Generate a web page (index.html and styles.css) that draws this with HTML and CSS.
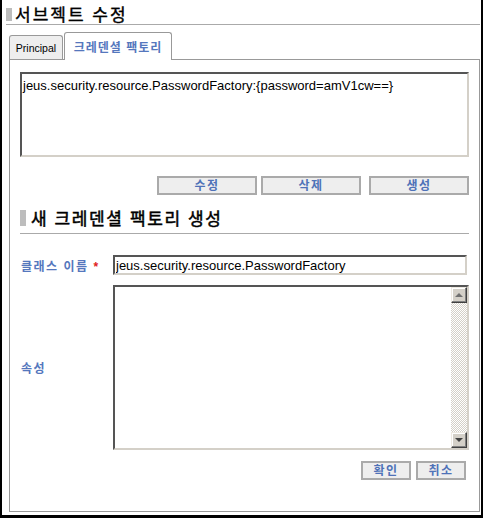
FILE: index.html
```html
<!DOCTYPE html>
<html lang="ko">
<head>
<meta charset="utf-8">
<title>서브젝트 수정</title>
<link rel="stylesheet" href="styles.css">
</head>
<body>
<div class="frame">
  <div class="head">
    <span class="bar"></span>
    <h1 class="title">서브젝트 수정</h1>
  </div>
  <div class="tabs">
    <div class="tab">Principal</div>
    <div class="tab active">크레덴셜 팩토리</div>
  </div>
  <div class="panel">
    <textarea class="list">jeus.security.resource.PasswordFactory:{password=amV1cw==}</textarea>
    <div class="actions">
      <button class="btn wide">수정</button>
      <button class="btn wide">삭제</button>
      <button class="btn wide last">생성</button>
    </div>
    <div class="subhead">
      <span class="bar bar2"></span>
      <h2 class="subtitle">새 크레덴셜 팩토리 생성</h2>
    </div>
    <div class="row first">
      <label class="label">클래스 이름 <span class="req">*</span></label>
      <input class="field" type="text" value="jeus.security.resource.PasswordFactory">
    </div>
    <div class="row second">
      <label class="label">속성</label>
      <div class="area">
        <textarea class="props"></textarea>
        <div class="sb">
          <div class="sbbtn"><span class="tri up"></span></div>
          <div class="track"></div>
          <div class="sbbtn"><span class="tri down"></span></div>
        </div>
      </div>
    </div>
    <div class="actions small">
      <button class="btn narrow">확인</button>
      <button class="btn narrow">취소</button>
    </div>
  </div>
</div>
</body>
</html>
```

FILE: styles.css
```css
html, body {
  margin: 0;
  padding: 0;
  background: #fff;
}

.frame {
  box-sizing: border-box;
  width: 483px;
  height: 518px;
  border-style: solid;
  border-color: #000;
  border-width: 0 2px 3px 2px;
  padding: 4px 0 0 4px;
  font-family: "Noto Sans CJK KR", sans-serif;
  overflow: hidden;
}

.head {
  display: flex;
  align-items: center;
  height: 20px;
  margin-right: 1px;
  border-bottom: 1px solid #aaa;
}

.bar {
  display: block;
  width: 6px;
  height: 13px;
  background: #bdbdbd;
  margin-right: 3px;
  flex: none;
}

.title {
  margin: 0;
  font-size: 17px;
  font-weight: normal;
  letter-spacing: 2px;
  -webkit-text-stroke: 0.4px #000;
  line-height: 20px;
  color: #000;
}

.tabs {
  display: flex;
  align-items: flex-end;
  height: 34px;
  margin-left: 3px;
}

.tab {
  box-sizing: border-box;
  width: 54px;
  height: 24px;
  border: 1px solid #999;
  border-bottom: none;
  border-radius: 3px 3px 0 0;
  background: #eee;
  display: flex;
  align-items: center;
  justify-content: center;
  font-family: "Liberation Sans", sans-serif;
  font-size: 10.5px;
  color: #000;
}

.tab.active {
  position: relative;
  width: 108px;
  height: 28px;
  margin-left: 1px;
  margin-bottom: -1px;
  padding-bottom: 1px;
  background: #fff;
  font-family: "Noto Sans CJK KR", sans-serif;
  font-size: 12px;
  font-weight: bold;
  letter-spacing: 1px;
  color: #5577bd;
}

.panel {
  box-sizing: border-box;
  width: 471px;
  height: 453px;
  margin-left: 3px;
  border: 1px solid #999;
  padding: 12px 0 0 10px;
}

.list {
  display: block;
  box-sizing: border-box;
  width: 449px;
  height: 85px;
  margin: 0;
  padding: 4px 1px;
  border: 2px solid;
  border-color: #555 #d4d0c8 #d4d0c8 #555;
  resize: none;
  outline: none;
  font-family: "Liberation Sans", Arial, sans-serif;
  font-size: 13px;
  line-height: 15px;
  color: #000;
  overflow: hidden;
}

.actions {
  display: flex;
  justify-content: flex-end;
  width: 449px;
  margin-top: 19px;
  gap: 4px;
}

.btn {
  box-sizing: border-box;
  height: 19px;
  margin: 0;
  padding: 0 0 1px 0;
  border: 2px solid #aaa;
  background: #eee;
  font-family: "Noto Sans CJK KR", sans-serif;
  font-size: 12px;
  font-weight: bold;
  letter-spacing: 1.5px;
  line-height: 14px;
  color: #4f72b8;
}

.btn.wide {
  width: 100px;
}

.btn.last {
  margin-left: 4px;
}

.subhead {
  display: flex;
  align-items: center;
  box-sizing: border-box;
  width: 449px;
  height: 25px;
  margin-top: 14px;
  padding-bottom: 6px;
  border-bottom: 1px solid #aaa;
}

.bar2 {
  height: 16px;
  margin-right: 5px;
}

.subtitle {
  margin: 0;
  font-size: 17px;
  font-weight: normal;
  letter-spacing: 1.6px;
  -webkit-text-stroke: 0.5px #000;
  line-height: 18px;
  color: #000;
}

.row {
  display: flex;
  align-items: center;
}

.row.first {
  margin-top: 21px;
}

.row.second {
  margin-top: 10px;
}

.label {
  width: 92px;
  padding-left: 1px;
  flex: none;
  font-size: 12px;
  font-weight: bold;
  letter-spacing: 1.5px;
  color: #5577bd;
}

.req {
  color: #e02020;
  font-family: "Liberation Sans", sans-serif;
}

.field {
  box-sizing: border-box;
  width: 354px;
  height: 20px;
  margin: 0;
  padding: 0 1px;
  border: 2px solid;
  border-color: #555 #d4d0c8 #d4d0c8 #555;
  outline: none;
  font-family: "Liberation Sans", Arial, sans-serif;
  font-size: 13px;
  color: #000;
}

.area {
  box-sizing: border-box;
  display: flex;
  width: 356px;
  height: 165px;
  border: 2px solid;
  border-color: #555 #d4d0c8 #d4d0c8 #555;
}

.props {
  flex: 1;
  margin: 0;
  padding: 1px;
  border: none;
  outline: none;
  resize: none;
  font-family: "Liberation Sans", Arial, sans-serif;
  font-size: 13px;
}

.sb {
  display: flex;
  flex-direction: column;
  width: 16px;
  flex: none;
}

.sbbtn {
  box-sizing: border-box;
  height: 16px;
  flex: none;
  background: #d4d0c8;
  border: 1px solid;
  border-color: #eeeae2 #404040 #404040 #eeeae2;
  box-shadow: inset -1px -1px 0 #808080, inset 1px 1px 0 #fff;
  display: flex;
  align-items: center;
  justify-content: center;
}

.track {
  flex: 1;
  background: repeating-conic-gradient(#d4d0c8 0 25%, #fff 0 50%) 0 0 / 2px 2px;
}

.tri {
  display: block;
  width: 0;
  height: 0;
  border-left: 4px solid transparent;
  border-right: 4px solid transparent;
}

.tri.up {
  border-bottom: 4px solid #707070;
}

.tri.down {
  border-top: 4px solid #404040;
}

.actions.small {
  width: 446px;
  margin-top: 11px;
  gap: 5px;
}

.btn.narrow {
  width: 50px;
}
```
